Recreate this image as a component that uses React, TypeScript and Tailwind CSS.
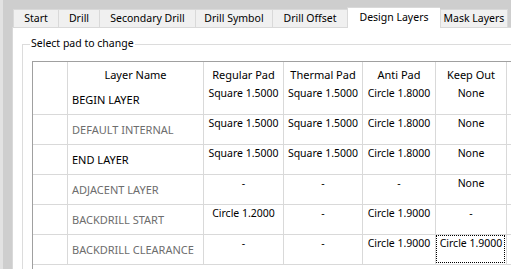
import React from "react";

const tabs = [
  { label: "Start", w: "w-[45px]" },
  { label: "Drill", w: "w-[41px]" },
  { label: "Secondary Drill", w: "w-[96px]" },
  { label: "Drill Symbol", w: "w-[77px]" },
  { label: "Drill Offset", w: "w-[75px]" },
  { label: "Design Layers", w: "w-[93px]", selected: true },
  { label: "Mask Layers", w: "w-[68px]", last: true },
];

type Row = { name: string; dim: boolean; vals: string[]; focus?: boolean };

const rows: Row[] = [
  { name: "BEGIN LAYER", dim: false, vals: ["Square 1.5000", "Square 1.5000", "Circle 1.8000", "None"] },
  { name: "DEFAULT INTERNAL", dim: true, vals: ["Square 1.5000", "Square 1.5000", "Circle 1.8000", "None"] },
  { name: "END LAYER", dim: false, vals: ["Square 1.5000", "Square 1.5000", "Circle 1.8000", "None"] },
  { name: "ADJACENT LAYER", dim: true, vals: ["-", "-", "-", "None"] },
  { name: "BACKDRILL START", dim: true, vals: ["Circle 1.2000", "-", "Circle 1.9000", "-"] },
  { name: "BACKDRILL CLEARANCE", dim: true, vals: ["-", "-", "Circle 1.9000", "Circle 1.9000"], focus: true },
];

const valW = ["w-[80px]", "w-[79px]", "w-[73px]", "w-[71px]"];
const headers = ["Regular Pad", "Thermal Pad", "Anti Pad", "Keep Out"];

export default function App() {
  return (
    <div
      className="w-[511px] h-[269px] overflow-hidden bg-[#cecece] border-l-[3px] border-[#e2e2e2] text-[10.5px] text-black"
      style={{ fontFamily: '"Noto Sans", "Open Sans", sans-serif' }}
    >
      {/* tab strip */}
      <div className="pt-[7px] pl-[10px] flex items-end h-[27px]">
        {tabs.map((t) =>
          t.selected ? (
            <div
              key={t.label}
              className={`${t.w} h-[21px] -mb-px relative z-10 bg-white border-l border-t border-[#d9d9d9] flex items-start justify-center pt-[2px] leading-[15px] shrink-0`}
            >
              {t.label}
            </div>
          ) : (
            <div
              key={t.label}
              className={`${t.w} h-[18px] bg-[#f0f0f0] border-l border-t ${t.last ? "border-r" : ""} border-[#d9d9d9] flex items-center justify-center leading-[15px] shrink-0`}
            >
              {t.label}
            </div>
          )
        )}
      </div>
      {/* page */}
      <div className="ml-[9px] h-[300px] bg-white border-l border-t border-[#d9d9d9] pl-[9px] pt-[16px]">
        {/* group box */}
        <div className="relative border-l border-t border-[#dcdcdc] h-[300px] pl-[9px] pt-[16px]">
          <span className="absolute -top-[9px] left-[7px] bg-white px-px leading-[15px]">
            Select pad to change
          </span>
          {/* grid */}
          <div className="border-l border-t border-[#a0a0a0] h-[300px] bg-white">
            {/* header */}
            <div className="flex h-[23px] text-[11px]">
              <div className="w-[35px] shrink-0 border-r border-[#d9d9d9]" />
              <div className="w-[136px] shrink-0 border-r border-[#d9d9d9] flex items-center justify-center pt-[1px] leading-[15px]">
                Layer Name
              </div>
              {headers.map((h, i) => (
                <div
                  key={h}
                  className={`${valW[i]} shrink-0 border-r border-[#d9d9d9] flex items-center justify-center pt-[1px] leading-[15px]`}
                >
                  {h}
                </div>
              ))}
            </div>
            {rows.map((r) => (
              <div key={r.name} className="flex h-[30px] border-b border-[#d9d9d9]">
                <div className="w-[35px] shrink-0 border-r border-[#d9d9d9]" />
                <div
                  className={`w-[136px] shrink-0 border-r border-[#d9d9d9] flex items-center pl-[4px] text-[11px] leading-[15px] whitespace-nowrap ${
                    r.dim ? "text-[#6d6d6d]" : "text-black"
                  }`}
                >
                  {r.name}
                </div>
                {r.vals.map((v, i) => (
                  <div
                    key={i}
                    className={`${valW[i]} shrink-0 border-r border-[#d9d9d9] relative text-center pt-[1px] leading-[15px] whitespace-nowrap`}
                  >
                    {v}
                    {r.focus && i === 3 && (
                      <span className="absolute left-0 top-0 right-px bottom-px border border-dotted border-black" />
                    )}
                  </div>
                ))}
              </div>
            ))}
          </div>
        </div>
      </div>
    </div>
  );
}
